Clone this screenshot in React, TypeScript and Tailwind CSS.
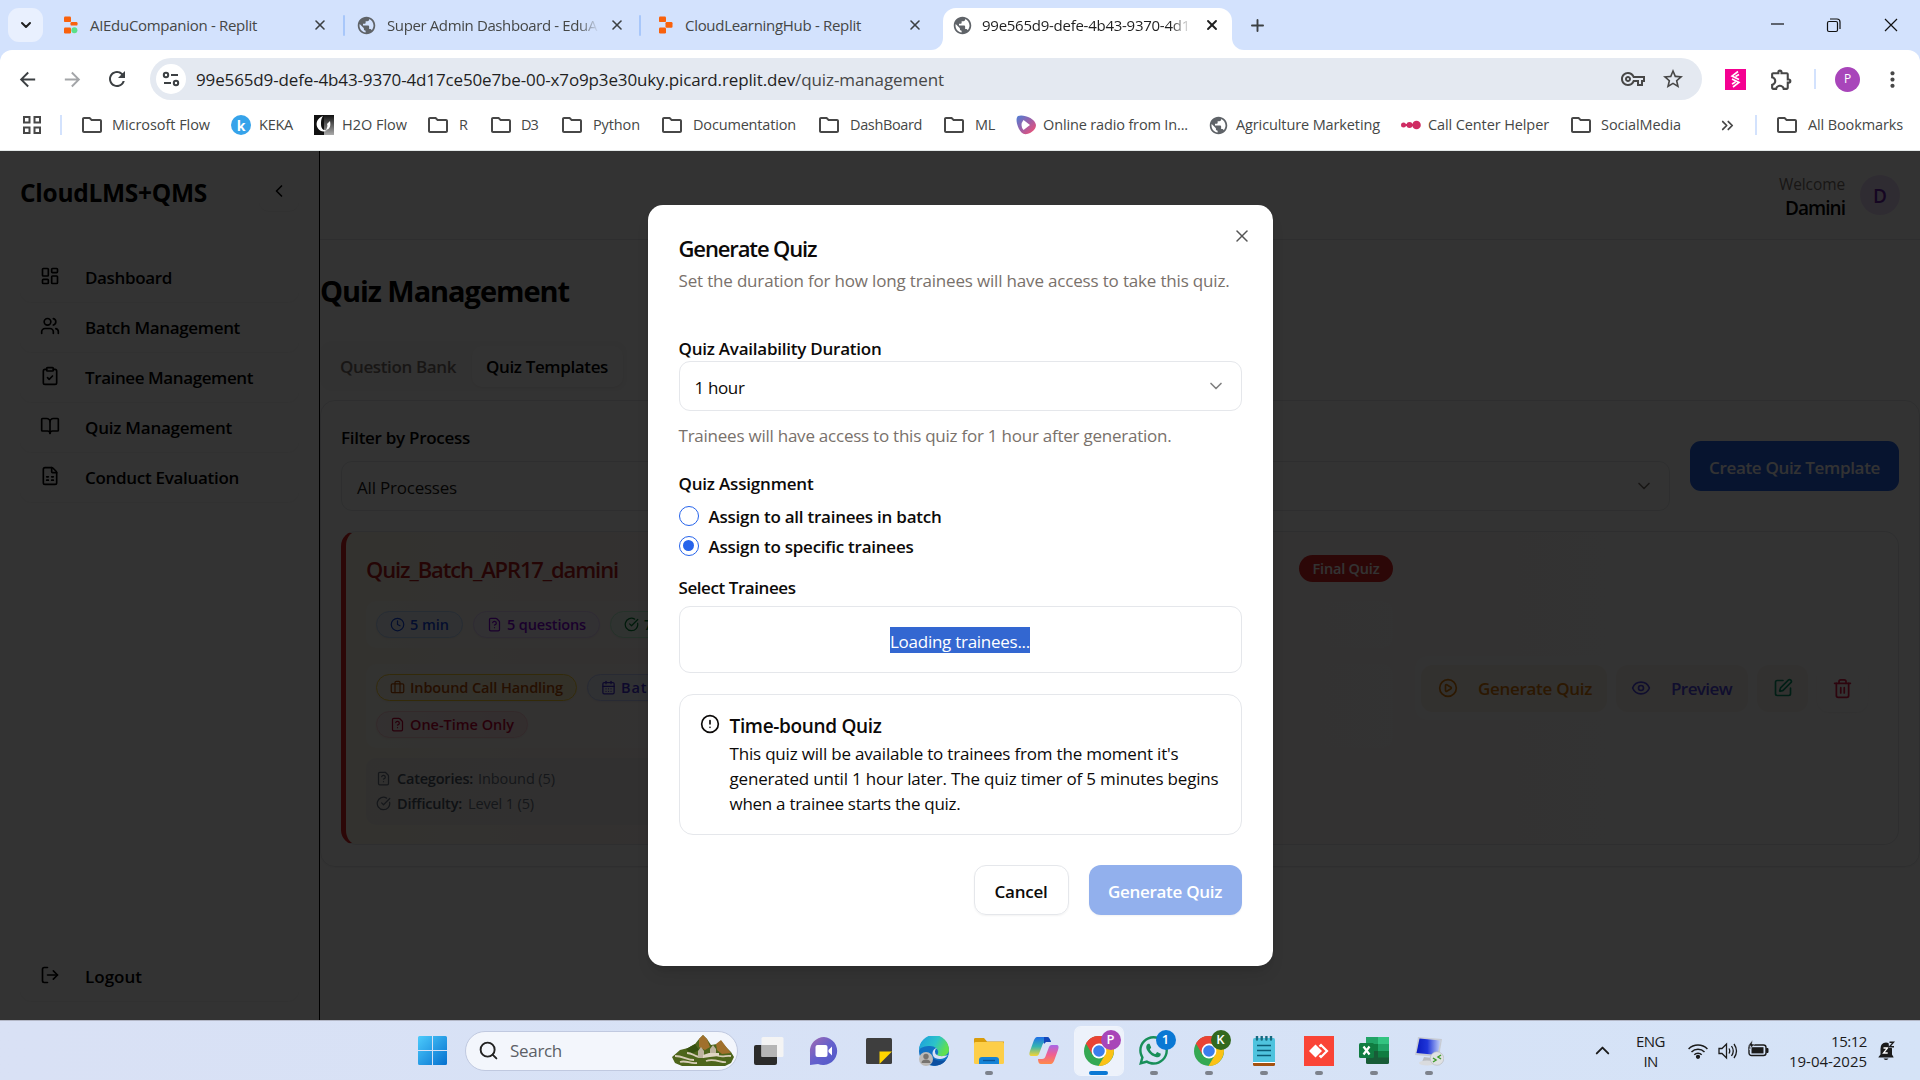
import { useLayoutEffect, useRef, type ReactNode } from 'react';
import {
  AlertCircle, BookOpen, Briefcase, CalendarDays, CheckCircle, ChevronDown, ChevronLeft, ChevronUp,
  ChevronsRight, ClipboardCheck, Clock, Eye, FileQuestion, FileSpreadsheet, LayoutDashboard, LogOut,
  PlayCircle, Plus, Search, SquarePen, Trash2, Users, X,
} from 'lucide-react';
import {
  MdArrowBack, MdArrowForward, MdMoreVert, MdOutlineExtension, MdOutlineFolder, MdOutlineVpnKey,
  MdPublic, MdRefresh, MdStarBorder,
} from 'react-icons/md';
import { FaWhatsapp } from 'react-icons/fa';

/** One line of text whose tracking is adjusted so that it fills exactly `w` pixels. */
function T({ w, className = '', children }: { w: number; className?: string; children: ReactNode }) {
  const ref = useRef<HTMLSpanElement>(null);
  useLayoutEffect(() => {
    const el = ref.current;
    if (!el) return;
    el.style.letterSpacing = '0px';
    const inner = el.firstElementChild as HTMLElement;
    const n = (inner.textContent || '').length;
    const natural = inner.getBoundingClientRect().width;
    el.style.letterSpacing = `${(w - natural) / Math.max(1, n)}px`;
  }, [w]);
  return (
    <span ref={ref} className={`inline-block shrink-0 whitespace-nowrap ${className}`} style={{ width: w }}>
      <span>{children}</span>
    </span>
  );
}

/* ---------- browser chrome ---------- */

function ReplitIcon({ mixed = false }: { mixed?: boolean }) {
  return (
    <svg width="14" height="18" viewBox="0 0 14 18" className="shrink-0">
      <rect x="0" y="0.5" width="7" height="5.6" rx="1.2" fill="#f9610c" />
      <rect x="6.5" y="6" width="7" height={mixed ? 3.6 : 5.8} rx="1.2" fill="#f9610c" />
      <rect x="0" y="11.6" width="7" height="5.8" rx="1.2" fill="#f9610c" />
      {mixed && <circle cx="10.4" cy="14.3" r="3" fill="#5be08a" />}
    </svg>
  );
}

function TabStrip() {
  return (
    <div className="flex h-[50px] shrink-0 items-center bg-[#d3e2fd]">
      <div className="ml-2 flex h-[34px] w-[35px] items-center justify-center rounded-[11px] bg-[#e9f0fe]">
        <ChevronDown size={16} strokeWidth={3} color="#1f1f1f" />
      </div>
      <div className="ml-[21px] flex h-full w-[279px] items-center">
        <ReplitIcon mixed />
        <T w={167} className="ml-3 text-[15px] text-[#454746]">AIEduCompanion - Replit</T>
        <X size={16} strokeWidth={2.4} color="#3c4043" className="ml-auto mr-[15px]" />
      </div>
      <div className="h-[21px] w-[2px] rounded bg-[#a8c7fa]" />
      <div className="ml-[11px] flex h-full w-[283px] items-center">
        <MdPublic size={21} color="#5f6368" className="shrink-0" />
        <div className="ml-[10px] w-[212px] [mask-image:linear-gradient(to_right,black_90%,transparent)]">
          <T w={210} className="text-[15px] text-[#454746]">Super Admin Dashboard - EduA</T>
        </div>
        <X size={16} strokeWidth={2.4} color="#3c4043" className="ml-auto mr-[14px]" />
      </div>
      <div className="h-[21px] w-[2px] rounded bg-[#a8c7fa]" />
      <div className="ml-[18px] flex h-full w-[272px] items-center">
        <ReplitIcon />
        <T w={176} className="ml-3 text-[15px] text-[#454746]">CloudLearningHub - Replit</T>
        <X size={16} strokeWidth={2.4} color="#3c4043" className="ml-auto mr-[8px]" />
      </div>
      <div className="mt-auto size-[12px] shrink-0 bg-white">
        <div className="size-full rounded-br-[12px] bg-[#d3e2fd]" />
      </div>
      <div className="mt-auto flex h-[42px] w-[289px] shrink-0 items-center rounded-t-[13px] bg-white pb-[8px]">
        <MdPublic size={21} color="#5f6368" className="ml-[9px] shrink-0" />
        <div className="ml-[9px] w-[209px] [mask-image:linear-gradient(to_right,black_90%,transparent)]">
          <T w={208} className="text-[15px] text-[#1f1f1f]">99e565d9-defe-4b43-9370-4d1</T>
        </div>
        <X size={16} strokeWidth={2.8} color="#1f1f1f" className="ml-auto mr-[12px]" />
      </div>
      <div className="mt-auto size-[12px] shrink-0 bg-white">
        <div className="size-full rounded-bl-[12px] bg-[#d3e2fd]" />
      </div>
      <Plus size={19} strokeWidth={2.4} color="#3c4043" className="ml-[4px]" />
      <svg width="128" height="16" viewBox="0 0 128 16" fill="none" stroke="#111" strokeWidth="1.2" className="ml-auto mr-[22px]">
        <path d="M1 7h13" />
        <rect x="57.5" y="4.5" width="10" height="10" rx="1.5" />
        <path d="M60 2h7a3 3 0 0 1 3 3v7" />
        <path d="M115 2l12 12M127 2l-12 12" />
      </svg>
    </div>
  );
}

function Toolbar() {
  return (
    <div className="bg-[#d3e2fd]">
      <div className="flex h-[50px] items-end rounded-t-[12px] bg-white">
        <div className="flex h-[42px] items-center">
          <MdArrowBack size={23} color="#3c4043" className="ml-[16px]" />
          <MdArrowForward size={23} color="#a3a5a8" className="ml-[22px]" />
          <MdRefresh size={24} color="#3c4043" className="ml-[21px]" />
        </div>
        <div className="ml-[21px] flex h-[42px] w-[1552px] items-center rounded-full bg-[#e4e9f1]">
          <div className="ml-[6px] flex size-[30px] items-center justify-center rounded-full bg-white">
            <svg width="18" height="16" viewBox="0 0 18 16" fill="none" stroke="#3c4043" strokeWidth="2">
              <circle cx="4" cy="4" r="2.2" />
              <path d="M9 4h7M2 12h7" />
              <circle cx="14" cy="12" r="2.2" />
            </svg>
          </div>
          <T w={599} className="ml-[10px] mt-[1px] text-[17px] text-[#1f1f1f]">99e565d9-defe-4b43-9370-4d17ce50e7be-00-x7o9p3e30uky.picard.replit.dev</T>
          <T w={149} className="mt-[1px] text-[17px] text-[#474747]">/quiz-management</T>
          <MdOutlineVpnKey size={24} color="#474747" className="ml-auto" />
          <MdStarBorder size={24} color="#474747" className="ml-[16px] mr-[17px]" />
        </div>
        <div className="flex h-[42px] flex-1 items-center">
          <svg width="21" height="21" viewBox="0 0 21 21" className="ml-[23px]" fill="none" stroke="#fff" strokeWidth="1.6">
            <rect width="21" height="21" fill="#f50091" stroke="none" />
            <path d="M13 2.500L7 7l7 3.500M14 5.500l-3.500 2M7 10l7 3.500L8 18M7 15l3.500-2" />
          </svg>
          <MdOutlineExtension size={25} color="#474747" className="ml-[23px]" />
          <div className="ml-[20px] h-[20px] w-[2px] bg-[#d3e2fd]" />
          <div className="ml-[19px] flex size-[25px] items-center justify-center rounded-full bg-[#a845ba] text-[12px] text-white">P</div>
          <MdMoreVert size={25} color="#474747" className="ml-[20px]" />
        </div>
      </div>
    </div>
  );
}

function Folder({ ml, gap = 11, w, children }: { ml: number; gap?: number; w: number; children: string }) {
  return (
    <div className="flex shrink-0 items-center" style={{ marginLeft: ml }}>
      <MdOutlineFolder size={24} color="#474747" className="-mx-[2px] shrink-0" />
      <span style={{ width: gap }} />
      <T w={w} className="text-[14.5px] text-[#454746]">{children}</T>
    </div>
  );
}

function Bookmarks() {
  return (
    <div className="flex h-[51px] shrink-0 items-center border-b border-[#e3e8e8] bg-white">
      <svg width="18" height="18" viewBox="0 0 18 18" fill="none" stroke="#474747" strokeWidth="2" className="ml-[23px]">
        <path d="M1 1h5.500v5.500H1zM11.500 1H17v5.500h-5.500zM1 11.500h5.500V17H1zM11.500 11.500H17V17h-5.500z" />
      </svg>
      <div className="ml-[19px] h-[20px] w-[2px] bg-[#d3e2fd]" />
      <Folder ml={20} gap={10} w={98}>Microsoft Flow</Folder>
      <div className="ml-[21px] flex size-[20px] items-center justify-center rounded-full bg-[#36a3ea] text-[14px] font-bold text-white">k</div>
      <T w={34} className="ml-[8px] text-[14.5px] text-[#454746]">KEKA</T>
      <svg width="20" height="20" viewBox="0 0 20 20" className="ml-[21px]">
        <defs>
          <linearGradient id="h2o" x1="0" y1="0" x2="0" y2="1"><stop offset="0" stopColor="#111" /><stop offset="1" stopColor="#aaa" /></linearGradient>
        </defs>
        <rect width="20" height="20" fill="#111" />
        <rect x="10" width="10" height="20" fill="url(#h2o)" />
        <path d="M9 1C3 3 1 9 4 13.500c2 3 6 4 9 2-4 0-6-2-6-6.500 0-3 0-5 2-8zM13 9l3-3c1 5 0 8-4 9 1-2 2-4 1-6z" fill="#fff" />
      </svg>
      <T w={65} className="ml-[8px] text-[14.5px] text-[#454746]">H2O Flow</T>
      <Folder ml={21} gap={11} w={8}>R</Folder>
      <Folder ml={24} gap={10} w={17}>D3</Folder>
      <Folder ml={24} w={47}>Python</Folder>
      <Folder ml={22} w={103}>Documentation</Folder>
      <Folder ml={23} w={72}>DashBoard</Folder>
      <Folder ml={22} w={20}>ML</Folder>
      <svg width="20" height="20" viewBox="0 0 20 20" className="ml-[21px] shrink-0">
        <defs>
          <linearGradient id="radio" x1="0" y1="0" x2="1" y2="1"><stop offset="0" stopColor="#4c7fd6" /><stop offset=".5" stopColor="#a05fa6" /><stop offset="1" stopColor="#ff4e6b" /></linearGradient>
        </defs>
        <path d="M2 1c5-2 17 2 18 9 0 6-8 10-12 9C3 18-2 4 2 1z" fill="url(#radio)" />
        <path d="M7.500 5a8 8 0 0 0 0 10l6.500-5z" fill="#fff" />
      </svg>
      <T w={145} className="ml-[7px] text-[14.5px] text-[#454746]">Online radio from In...</T>
      <MdPublic size={21} color="#5f6368" className="ml-[20px] shrink-0" />
      <T w={144} className="ml-[7px] text-[14.5px] text-[#454746]">Agriculture Marketing</T>
      <svg width="20" height="10" viewBox="0 0 20 10" fill="#cf2c63" className="ml-[21px] shrink-0">
        <circle cx="2.500" cy="5" r="2.500" /><circle cx="8.500" cy="5" r="3" /><circle cx="15.500" cy="5" r="4.300" /><path d="M2 4h14v2H2z" />
      </svg>
      <T w={121} className="ml-[7px] text-[14.5px] text-[#454746]">Call Center Helper</T>
      <Folder ml={22} gap={10} w={80}>SocialMedia</Folder>
      <ChevronsRight size={19} strokeWidth={2.2} color="#474747" className="ml-[37px]" />
      <div className="ml-[18px] h-[20px] w-[2px] bg-[#d3e2fd]" />
      <Folder ml={20} gap={11} w={95}>All Bookmarks</Folder>
    </div>
  );
}

/* ---------- application ---------- */

const NAV = [
  { icon: LayoutDashboard, label: 'Dashboard', w: 87 },
  { icon: Users, label: 'Batch Management', w: 155 },
  { icon: ClipboardCheck, label: 'Trainee Management', w: 168 },
  { icon: BookOpen, label: 'Quiz Management', w: 147 },
  { icon: FileSpreadsheet, label: 'Conduct Evaluation', w: 154 },
];

function Sidebar() {
  return (
    <aside className="flex w-[320px] shrink-0 flex-col border-r border-black px-5 pt-5 pb-[19px]">
      <div className="flex h-[42px] items-center">
        <T w={187} className="mt-[2px] text-[24.5px] font-bold">CloudLMS+QMS</T>
        <div className="mb-[2px] ml-auto flex size-[40px] items-center justify-center rounded-[10px] shadow-2xs">
          <ChevronLeft size={20} />
        </div>
      </div>
      <nav className="mt-[39px] flex flex-col">
        {NAV.map(({ icon: Icon, label, w }) => (
          <div key={label} className="flex h-[50px] items-center rounded-[12px] pl-5 shadow-xs">
            <Icon size={20} className="mb-[3px]" />
            <T w={w} className="ml-[25px] mt-[2px] text-[17px] font-semibold">{label}</T>
          </div>
        ))}
      </nav>
      <div className="mt-auto flex h-[50px] items-center rounded-[12px] pl-5 shadow-xs">
        <LogOut size={20} className="mb-[3px]" />
        <T w={57} className="ml-[25px] mt-[2px] text-[17px] font-semibold">Logout</T>
      </div>
    </aside>
  );
}

function Pill({ icon: Icon, w, cls, children }: { icon: typeof Clock; w: number; cls: string; children: string }) {
  return (
    <div className={`flex h-[27px] shrink-0 items-center rounded-full border px-[13px] shadow-xs ${cls}`}>
      <Icon size={15} className="mr-[5px] mb-[1px] shrink-0" />
      <T w={w} className="mt-[1px] text-[14.5px] font-semibold">{children}</T>
    </div>
  );
}

function QuizCard() {
  return (
    <div className="flex h-[314px] items-center rounded-[15px] border border-l-[5px] border-gray-200 border-l-[#dc2626] bg-linear-to-r from-amber-50 via-red-50 via-20% to-white">
      <div className="flex h-full w-[1052px] shrink-0 flex-col pl-[20px] pr-[5px]">
        <div className="mt-[23px] flex h-[27px] items-center justify-between">
          <T w={252} className="mt-[1px] text-[22px] font-semibold text-[#b91c1c]">Quiz_Batch_APR17_damini</T>
          <div className="flex h-[27px] w-[94px] items-center justify-center rounded-full bg-[#dc2626] text-white">
            <T w={67} className="mt-[1px] text-[14.5px] font-semibold">Final Quiz</T>
          </div>
        </div>
        <div className="mt-[19px] flex h-[47px] items-center gap-[10px] rounded-[10px] bg-white/40 px-[10px]">
          <Pill icon={Clock} w={39} cls="border-blue-200 bg-blue-50 text-blue-700">5 min</Pill>
          <Pill icon={FileQuestion} w={79} cls="border-purple-200 bg-purple-50 text-purple-700">5 questions</Pill>
          <Pill icon={CheckCircle} w={90} cls="border-green-200 bg-green-50 text-green-700">70% to pass</Pill>
        </div>
        <div className="mt-[16px] flex h-[84px] flex-col justify-center gap-[10px] rounded-[10px] bg-white/40 px-[10px]">
          <div className="flex gap-[10px]">
            <Pill icon={Briefcase} w={153} cls="border-amber-300 bg-linear-to-r from-amber-50 to-amber-100 text-amber-700">Inbound Call Handling</Pill>
            <Pill icon={CalendarDays} w={100} cls="border-indigo-200 bg-indigo-50 text-indigo-700">Batch_APR17</Pill>
          </div>
          <div className="flex">
            <Pill icon={FileQuestion} w={104} cls="border-rose-200 bg-linear-to-r from-rose-50 to-rose-100 text-rose-700">One-Time Only</Pill>
          </div>
        </div>
        <div className="mt-[10px] flex h-[67px] flex-col justify-center rounded-[10px] bg-linear-to-r from-gray-200/50 to-gray-100/0 pl-[10px] text-gray-500">
          <div className="flex h-[25px] items-center">
            <FileQuestion size={15} className="mb-[1px] mr-[6px]" />
            <T w={76} className="text-[14.5px] font-semibold text-gray-600">Categories:</T>
            <T w={77} className="ml-[5px] text-[14.5px]">Inbound (5)</T>
          </div>
          <div className="flex h-[25px] items-center">
            <CheckCircle size={15} className="mb-[1px] mr-[6px]" />
            <T w={65} className="text-[14.5px] font-semibold text-gray-600">Difficulty:</T>
            <T w={66} className="ml-[6px] text-[14.5px]">Level 1 (5)</T>
          </div>
        </div>
      </div>
      <div className="ml-[17px] flex h-[64px] w-[460px] items-center gap-[9px] rounded-[12px] bg-white/40 pl-[6px]">
        <div className="flex h-[47px] w-[186px] items-center rounded-[12px] bg-[#faf3e8] pl-[17px] text-[#d97706]">
          <PlayCircle size={20} />
          <T w={114} className="ml-[20px] mt-[2px] text-[17px] font-semibold">Generate Quiz</T>
        </div>
        <div className="flex h-[47px] w-[132px] items-center rounded-[12px] bg-[#faf5ee] pl-[15px] text-[#4f46e5]">
          <Eye size={20} />
          <T w={61} className="ml-[20px] mt-[2px] text-[17px] font-semibold">Preview</T>
        </div>
        <div className="flex h-[47px] w-[51px] items-center justify-center rounded-[12px] bg-[#faf5ee] text-[#059669]">
          <SquarePen size={20} />
        </div>
        <div className="flex h-[47px] w-[51px] items-center justify-center rounded-[12px] text-[#e11d48] shadow-xs">
          <Trash2 size={21} />
        </div>
      </div>
    </div>
  );
}

function MainArea() {
  return (
    <main className="flex min-w-0 flex-1 flex-col">
      <div className="flex h-[89px] shrink-0 items-center justify-end gap-[15px] border-b border-gray-200 pr-5">
        <div className="mt-[2px] flex flex-col items-end">
          <T w={66} className="h-[23px] text-[15.5px] leading-[23px] text-stone-500">Welcome</T>
          <T w={60} className="h-[24px] text-[19px] font-semibold leading-[24px]">Damini</T>
        </div>
        <div className="flex size-[40px] items-center justify-center rounded-full bg-[#ecdcfa] pt-[2px] text-[19px] font-semibold text-[#6b21a8]">D</div>
      </div>
      <div className="flex h-[104px] items-center">
        <T w={249} className="mb-[2px] text-[29px] font-bold">Quiz Management</T>
      </div>
      <div className="-mt-[3px] flex h-[50px] w-[307px] items-center justify-between rounded-[12px] bg-[#f9f8f7] pl-5 pr-[4px]">
        <T w={116} className="mt-[2px] text-[17px] font-semibold text-stone-500">Question Bank</T>
        <div className="flex h-[41px] w-[151px] items-center rounded-[10px] bg-white pl-[14px] shadow-xs">
          <T w={122} className="mt-[2px] text-[17px] font-semibold">Quiz Templates</T>
        </div>
      </div>
      <div className="mt-[9px] h-[467px] rounded-[15px] border border-gray-200 pl-[20px] pr-[20px] pt-[24px] shadow-xs">
        <div className="flex items-start">
          <div className="flex flex-col">
            <T w={129} className="h-[25px] text-[17px] font-semibold leading-[25px]">Filter by Process</T>
            <div className="mt-[11px] flex h-[50px] w-[1329px] items-center rounded-[11px] border border-gray-200 px-[15px]">
              <T w={100} className="mt-[3px] text-[17px] text-stone-900">All Processes</T>
              <ChevronDown size={20} className="ml-auto text-stone-500" />
            </div>
          </div>
          <div className="ml-[20px] mt-[16px] flex h-[50px] w-[209px] items-center justify-center rounded-[11px] bg-[#2563eb] text-white">
            <T w={171} className="mt-[4px] text-[17px] font-semibold">Create Quiz Template</T>
          </div>
        </div>
        <div className="mt-[20px]">
          <QuizCard />
        </div>
      </div>
    </main>
  );
}

function Dialog() {
  return (
    <div className="relative flex h-[761px] w-[625px] flex-col rounded-[15px] bg-white px-[31px] pt-[30px] text-[17px] text-[#0c0a09] shadow-lg">
      <X size={20} strokeWidth={1.8} className="absolute right-[21px] top-[21px] text-[#555]" />
      <T w={138} className="-mt-[1px] h-[29px] text-[22px] font-semibold leading-[29px]">Generate Quiz</T>
      <T w={551} className="mt-[6px] h-[24px] leading-[24px] text-stone-500">Set the duration for how long trainees will have access to take this quiz.</T>
      <T w={203} className="mt-[44px] h-[24px] font-semibold leading-[24px]">Quiz Availability Duration</T>
      <div className="flex h-[50px] shrink-0 items-center rounded-[11px] border border-gray-200 px-[15px]">
        <T w={50} className="mt-[4px]">1 hour</T>
        <ChevronDown size={20} className="ml-auto text-[#808080]" />
      </div>
      <T w={493} className="mt-[13px] h-[24px] leading-[24px] text-stone-500">Trainees will have access to this quiz for 1 hour after generation.</T>
      <T w={135} className="mt-[24px] h-[24px] font-semibold leading-[24px]">Quiz Assignment</T>
      <div className="mt-[8px] flex h-[24px] items-center">
        <div className="size-[20px] rounded-full border border-[#2563eb]" />
        <T w={233} className="ml-[10px] mt-[2px] font-semibold leading-[24px]">Assign to all trainees in batch</T>
      </div>
      <div className="mt-[6px] flex h-[24px] items-center">
        <div className="flex size-[20px] items-center justify-center rounded-full border border-[#2563eb]">
          <div className="mb-[1px] size-[11px] rounded-full bg-[#2563eb]" />
        </div>
        <T w={205} className="ml-[10px] mt-[2px] font-semibold leading-[24px]">Assign to specific trainees</T>
      </div>
      <T w={117} className="mt-[18px] h-[24px] font-semibold leading-[24px]">Select Trainees</T>
      <div className="mt-[6px] flex h-[67px] shrink-0 items-center justify-center rounded-[11px] border border-gray-200">
        <T w={140} className="h-[26px] bg-[#3367d1] leading-[29px] text-white">Loading trainees...</T>
      </div>
      <div className="mt-[21px] flex h-[141px] shrink-0 rounded-[14px] border border-gray-200 pl-[20px] pt-[19px]">
        <AlertCircle size={20} className="shrink-0" />
        <div className="ml-[10px] flex flex-col">
          <T w={152} className="h-[26px] text-[19px] font-semibold leading-[24px]">Time-bound Quiz</T>
          <T w={449} className="mt-[1px] h-[25px] leading-[25px]">This quiz will be available to trainees from the moment it's</T>
          <T w={489} className="h-[25px] leading-[25px]">generated until 1 hour later. The quiz timer of 5 minutes begins</T>
          <T w={231} className="h-[25px] leading-[25px]">when a trainee starts the quiz.</T>
        </div>
      </div>
      <div className="mt-[30px] flex h-[50px] justify-end gap-[20px]">
        <div className="flex w-[95px] items-center justify-center rounded-[12px] border border-gray-200 shadow-xs">
          <T w={53} className="mt-[4px] font-semibold">Cancel</T>
        </div>
        <div className="flex w-[153px] items-center justify-center rounded-[12px] bg-[#92b0ed] text-white shadow-xs">
          <T w={114} className="mt-[4px] font-semibold">Generate Quiz</T>
        </div>
      </div>
    </div>
  );
}

/* ---------- taskbar ---------- */

function Chrome() {
  return (
    <svg width="30" height="30" viewBox="0 0 30 30">
      <circle cx="15" cy="15" r="15" fill="#34a853" />
      <path d="M2 7.500A15 15 0 0 1 28 7.500L15 15z" fill="#ea4335" />
      <path d="M2 7.500L8.500 18.700 15 8h13A15 15 0 0 0 2 7.500z" fill="#ea4335" />
      <path d="M28 7.800A15 15 0 0 1 14.500 30L21.500 18 15 7.800z" fill="#fbc116" />
      <circle cx="15" cy="15" r="7.400" fill="#fff" />
      <circle cx="15" cy="15" r="5.800" fill="#3b7ded" />
    </svg>
  );
}

function TaskIcon({ running, active, badge, badgeCls = '', children }: { running?: boolean; active?: boolean; badge?: string; badgeCls?: string; children: ReactNode }) {
  return (
    <div className="flex w-[55px] shrink-0 justify-center">
      <div className={`relative flex h-[48px] w-[48px] flex-col items-center ${active ? 'rounded-[6px] bg-white/55 ring-1 ring-white/60' : ''}`}>
        <div className="mt-[9px] flex h-[30px] items-center">{children}</div>
        {badge && <div className={`absolute left-[26px] top-[3px] flex size-[20px] items-center justify-center rounded-full text-[13px] font-semibold text-white ${badgeCls}`}>{badge}</div>}
        {active && <div className="mt-[5px] h-[4px] w-[19px] rounded-full bg-[#0b78d4]" />}
        {running && !active && <div className="mt-[5px] h-[4px] w-[8px] rounded-full bg-[#7d828c]" />}
      </div>
    </div>
  );
}

function Taskbar() {
  return (
    <div className="flex h-[60px] shrink-0 items-center border-t border-[#b3b7c6] bg-linear-to-r from-[#d9e1f5] to-[#d5e3f7]">
      <svg width="29" height="29" viewBox="0 0 29 29" className="ml-[418px] shrink-0">
        <defs>
          <linearGradient id="win" x1="0" y1="0" x2="1" y2="1"><stop offset="0" stopColor="#4ccbfc" /><stop offset="1" stopColor="#0570cf" /></linearGradient>
        </defs>
        <path d="M0 1.500Q0 0 1.500 0H14v14H0zM15 0h12.500Q29 0 29 1.500V14H15zM0 15h14v14H1.500Q0 29 0 27.500zM15 15h14v12.500q0 1.500-1.500 1.500H15z" fill="url(#win)" />
      </svg>
      <div className="ml-[18px] flex h-[40px] w-[273px] shrink-0 items-center overflow-hidden rounded-full border border-[#c0c9e0] bg-[#f3f6fc]">
        <Search size={21} strokeWidth={2.2} color="#222" className="ml-[12px]" />
        <T w={52} className="ml-[11px] text-[17px] text-[#5c5f66]">Search</T>
        <svg width="62" height="31" viewBox="0 0 62 31" className="ml-auto mr-[3px]">
          <path d="M0 22L8 15l8-2L23 9l4-5 4-4 4 4 4 6 6-1 4-3 5 6 5 5 3 5-3 6-6 3H10L3 28z" fill="#4d651b" />
          <path d="M27 4l4-4 4 4 3 8-5 3-6-3zM44 9l5-4 6 8 4 5-9 1-5-4z" fill="#a0702c" />
          <path d="M14 14l9-5 4 6-8 4z" fill="#35500f" />
          <path d="M3 21c8 0 12 4 19 4M8 27c6-2 10 2 17 1M34 26c8-3 16 2 20 1M15 18c6 0 6 3 12 4M44 20c6 3 10 0 15 1" fill="none" stroke="#d6ccb6" strokeWidth="1.800" />
          <path d="M26 16l3-4 3 4v7h-6zM38 14l3-4 3 4v5h-6z" fill="#bdb39f" />
          <path d="M31 20l6-2h10v3l-9 1-7 1z" fill="#ded5c3" />
        </svg>
      </div>
      <div className="ml-[3px] flex">
        <TaskIcon>
          <svg width="30" height="30" viewBox="0 0 30 30">
            <rect x="0" y="9" width="23" height="20" rx="2" fill="#2b2b2a" />
            <rect x="7.500" y="1" width="22" height="20" rx="1.500" fill="#f4f4f4" />
            <rect x="7.500" y="9" width="15.500" height="12" fill="#b5b5b5" />
          </svg>
        </TaskIcon>
        <TaskIcon>
          <svg width="29" height="30" viewBox="0 0 29 30">
            <defs><linearGradient id="meet" x1="0" y1="0" x2="1" y2="1"><stop offset="0" stopColor="#a56bb0" /><stop offset=".5" stopColor="#6460cc" /><stop offset="1" stopColor="#5059c9" /></linearGradient></defs>
            <path d="M15 1a14 14 0 1 1-6 27L1 29V16A14 14 0 0 1 15 1z" fill="url(#meet)" />
            <rect x="6.500" y="9" width="12" height="12" rx="2" fill="#fff" />
            <path d="M19.500 14l3.500-3.500v9L19.500 16z" fill="#fff" />
          </svg>
        </TaskIcon>
        <TaskIcon>
          <svg width="26" height="28" viewBox="0 0 26 28">
            <rect y="1" width="26" height="26" rx="1.500" fill="#3e3e3e" />
            <path d="M13.500 14.500H26L13.500 27z" fill="#fed500" />
          </svg>
        </TaskIcon>
        <TaskIcon>
          <svg width="30" height="30" viewBox="0 0 30 30">
            <defs><linearGradient id="edge" x1="0" y1="0" x2="1" y2=".4"><stop offset="0" stopColor="#1a9be0" /><stop offset=".6" stopColor="#2cc3c9" /><stop offset="1" stopColor="#5fe04f" /></linearGradient></defs>
            <circle cx="15" cy="15" r="15" fill="#1272c4" />
            <path d="M0 14A15 15 0 0 1 30 14c0 6-9 8-12 5 3-3 0-9-7-9-5 0-9 1-11 4z" fill="url(#edge)" />
            <path d="M11 16c0 7 7 10 16 8-4 6-12 7-17 4z" fill="#0c4fa0" />
            <path d="M18 12a4 4 0 0 0 0 7c3 2 8 1 11 0-3 4-8 5-13 3-4-3-3-9 2-10z" fill="#d9e1f5" />
            <circle cx="7" cy="23" r="7" fill="#bdbab7" />
            <circle cx="7" cy="20.500" r="2.700" fill="#77736f" />
            <path d="M2.500 27q0-3.500 4.500-3.500T11.500 27z" fill="#77736f" />
          </svg>
        </TaskIcon>
        <TaskIcon running>
          <svg width="30" height="28" viewBox="0 0 30 28">
            <path d="M0 2Q0 1 1.500 1H10l3 3.500H30V10H0z" fill="#d99c0b" />
            <rect y="5" width="30" height="22" rx="1.500" fill="#fdce48" />
            <path d="M5 27v-4q0-3 3-3h14q3 0 3 3v4z" fill="#1583d6" />
            <path d="M9 23.500h12" stroke="#0b5597" strokeWidth="1.300" />
          </svg>
        </TaskIcon>
        <TaskIcon>
          <svg width="30" height="29" viewBox="0 0 30 29">
            <defs>
              <linearGradient id="cp1" x1="0" y1="0" x2="0" y2="1"><stop offset="0" stopColor="#1e6fe8" /><stop offset=".5" stopColor="#35b4b0" /><stop offset="1" stopColor="#f6d534" /></linearGradient>
              <linearGradient id="cp2" x1="0" y1="0" x2="0" y2="1"><stop offset="0" stopColor="#a766e8" /><stop offset=".5" stopColor="#ef5f93" /><stop offset="1" stopColor="#ff8a4a" /></linearGradient>
            </defs>
            <path d="M8 1h10c2 0 3 2 4 5h-5c-2 0-3 1-4 4l-3 8c-1 2-2 2-4 2H3c-3 0-3-2-2-5L5 4c1-2 2-3 3-3z" fill="url(#cp1)" />
            <path d="M18 1c2 0 3 2 4 5h-5l-2 2V1z" fill="#1446b8" />
            <path d="M22 28H12c-2 0-3-2-3-5h4c2 0 3-1 4-4l3-8c1-2 2-2 4-2h3c3 0 3 2 2 5l-4 11c-1 2-2 3-3 3z" fill="url(#cp2)" />
          </svg>
        </TaskIcon>
        <TaskIcon active badge="P" badgeCls="bg-[#a845b8]"><Chrome /></TaskIcon>
        <TaskIcon running badge="1" badgeCls="bg-[#0a78d4]"><FaWhatsapp size={33} color="#178f59" /></TaskIcon>
        <TaskIcon running badge="K" badgeCls="bg-[#33691e]"><Chrome /></TaskIcon>
        <TaskIcon running>
          <svg width="22" height="30" viewBox="0 0 22 30">
            <rect y="2" width="22" height="25" rx="1.500" fill="#4fc3de" />
            <path d="M0 27h22v1.500q0 1.500-1.500 1.500h-19Q0 30 0 28.500z" fill="#a4510f" />
            <path d="M0 26.500h22" stroke="#fff" />
            <path d="M4 9.500h14M4 14.500h14M4 19.500h14" stroke="#0c5c77" strokeWidth="1.700" />
            <path d="M4 .5v3M8.700.5v3M13.400.5v3M18 .5v3" stroke="#17697f" strokeWidth="2.400" strokeLinecap="round" />
          </svg>
        </TaskIcon>
        <TaskIcon running>
          <svg width="30" height="30" viewBox="0 0 30 30">
            <rect width="30" height="30" fill="#fa4436" />
            <path d="M5 15l6.500-6.500L18 15l-6.500 6.500z" fill="#fff" />
            <path d="M15.500 10.500L17 9l6 6-6 6-1.500-1.500" fill="none" stroke="#fff" strokeWidth="2.200" />
          </svg>
        </TaskIcon>
        <TaskIcon running>
          <svg width="30" height="29" viewBox="0 0 30 29">
            <rect x="7" y="1" width="23" height="27" rx="1.500" fill="#185c37" />
            <path d="M7 1h12v7H7z" fill="#21a366" />
            <path d="M19 1h11v7H19z" fill="#33c481" />
            <path d="M7 8h12v7H7z" fill="#107c41" />
            <path d="M19 8h11v7H19z" fill="#21a366" />
            <path d="M19 15h11v6.500H19z" fill="#107c41" />
            <rect y="7" width="15" height="15" rx="1.500" fill="#107c41" />
            <path d="M4.500 10.500l6 8M10.500 10.500l-6 8" stroke="#fff" strokeWidth="2.200" />
          </svg>
        </TaskIcon>
        <TaskIcon running>
          <svg width="30" height="30" viewBox="0 0 30 30">
            <defs><linearGradient id="rdp" x1="0" y1="0" x2="1" y2="0"><stop offset="0" stopColor="#0a1cc0" /><stop offset=".45" stopColor="#1e35d8" /><stop offset="1" stopColor="#c3d1f8" /></linearGradient></defs>
            <path d="M4 1l24 2-3 18L1 19z" fill="#c7cbd2" />
            <path d="M5.500 2.500L26.500 4.500 23.500 19 2.500 17z" fill="url(#rdp)" />
            <path d="M10 21l8 1-1 4H8z" fill="#b9bcc0" />
            <ellipse cx="13" cy="27" rx="8" ry="2.500" fill="#d9dbde" />
            <circle cx="23" cy="22.500" r="6.800" fill="#dfe1e3" stroke="#b4b7ba" strokeWidth=".6" />
            <path d="M19 22l3 2-3 2M27 19l-3 2 3 2" fill="none" stroke="#3f9c2c" strokeWidth="1.500" />
          </svg>
        </TaskIcon>
      </div>
      <div className="ml-auto flex items-center pr-[25px] text-[15px] text-[#1b1b1b]">
        <ChevronUp size={23} strokeWidth={2} />
        <div className="ml-[22px] flex flex-col items-center">
          <T w={29} className="h-[20px] leading-[20px]">ENG</T>
          <T w={14} className="h-[20px] leading-[20px]">IN</T>
        </div>
        <svg width="20" height="16" viewBox="0 0 20 16" fill="none" stroke="#1b1b1b" strokeWidth="1.500" className="ml-[23px]">
          <path d="M.6 6a13.300 13.300 0 0 1 18.800 0M3.500 9a9.200 9.200 0 0 1 13 0M6.300 11.800a5.200 5.200 0 0 1 7.400 0" />
          <circle cx="10" cy="13.800" r="1.400" fill="#1b1b1b" />
        </svg>
        <svg width="20" height="18" viewBox="0 0 20 18" fill="none" stroke="#1b1b1b" strokeWidth="1.300" className="ml-[10px]">
          <path d="M1 6.500h3L8.500 2v14L4 11.500H1zM11 6.500q1.500 2.500 0 5M13.500 4q3.500 5 0 10M16 2q5 7 0 14" />
        </svg>
        <svg width="21" height="17" viewBox="0 0 21 17" className="-mt-[4px] ml-[10px]">
          <rect x="1" y="5" width="17" height="10.500" rx="2.500" fill="none" stroke="#1b1b1b" strokeWidth="1.400" />
          <rect x="3.500" y="7.200" width="12" height="6.200" fill="#1b1b1b" />
          <path d="M18.500 8.500h1.500v4h-1.500z" fill="#1b1b1b" stroke="#1b1b1b" />
          <path d="M4.500 0L0 6h3l-1.500 4L6.500 4H4z" fill="#1b1b1b" stroke="#d6e2f6" strokeWidth=".5" />
        </svg>
        <div className="ml-[20px] flex flex-col items-end">
          <T w={36} className="h-[20px] leading-[20px]">15:12</T>
          <T w={78} className="h-[20px] leading-[20px]">19-04-2025</T>
        </div>
        <svg width="17" height="20" viewBox="0 0 17 20" className="ml-[11px]">
          <path d="M2.500 13.500V8Q2.500 1.500 8 1.500T14 8v5.500l1.500 2.500v.5H.5V16zM5.500 17.500h5q-2.500 3-5 0z" fill="#1b1b1b" />
          <path d="M5.500 7h4l-4 5h4.200" fill="none" stroke="#fff" strokeWidth="1.300" />
          <path d="M10.500 0H17v7h-6z" fill="#d6e2f6" />
          <path d="M11.500 1.200h4l-4 4.600H16" fill="none" stroke="#1b1b1b" strokeWidth="1.400" />
        </svg>
      </div>
    </div>
  );
}

export default function App() {
  return (
    <div className="flex h-[1080px] w-[1920px] flex-col overflow-hidden bg-white font-['Open_Sans','Noto_Sans',sans-serif] text-black">
      <TabStrip />
      <Toolbar />
      <Bookmarks />
      <div className="relative flex min-h-0 flex-1">
        <Sidebar />
        <MainArea />
        <div className="absolute inset-0 flex items-center justify-center bg-black/80">
          <Dialog />
        </div>
      </div>
      <Taskbar />
    </div>
  );
}
